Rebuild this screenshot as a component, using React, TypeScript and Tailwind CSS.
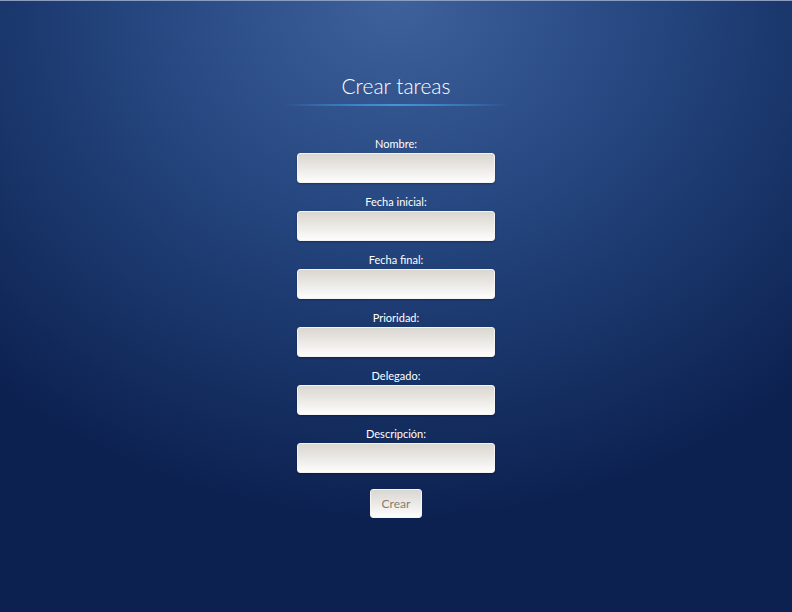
const fields = ['Nombre:', 'Fecha inicial:', 'Fecha final:', 'Prioridad:', 'Delegado:', 'Descripción:'];

export default function App() {
  return (
    <div
      className="min-h-[612px] w-full border-t border-[#8a9cc0] bg-[radial-gradient(ellipse_75%_85%_at_50%_0%,#3f619b_0%,#24457e_45%,#0c2150_100%)] text-white"
      style={{ fontFamily: 'Lato, "Open Sans", sans-serif' }}
    >
      <div className="flex flex-col items-center pt-[72px]">
        <h1 className="text-[21px] leading-[26px] font-light text-white">Crear tareas</h1>
        <div className="mt-[5px] h-[2px] w-[226px] bg-[linear-gradient(to_right,transparent,#3a8fd6_30%,#4aa6ea_50%,#3a8fd6_70%,transparent)] opacity-80" />
        <form className="mt-[31px] flex flex-col items-center gap-[12px]">
          {fields.map((f) => (
            <label key={f} className="flex flex-col items-center">
              <span className="text-[11px] leading-[14px] text-white">{f}</span>
              <input
                type="text"
                className="mt-[2px] h-[30px] w-[198px] rounded-[3px] border border-[#f4f4f4] bg-[linear-gradient(to_bottom,#dad6d0,#fdfdfc)] shadow-[0_1px_2px_rgba(0,0,0,0.3)] outline-none"
              />
            </label>
          ))}
          <button
            type="button"
            className="mt-[4px] h-[29px] w-[52px] rounded-[3px] border border-[#f4f4f4] bg-[linear-gradient(to_bottom,#dad6d0,#fdfdfc)] text-[12px] text-[#857d70]"
          >
            Crear
          </button>
        </form>
      </div>
    </div>
  );
}
